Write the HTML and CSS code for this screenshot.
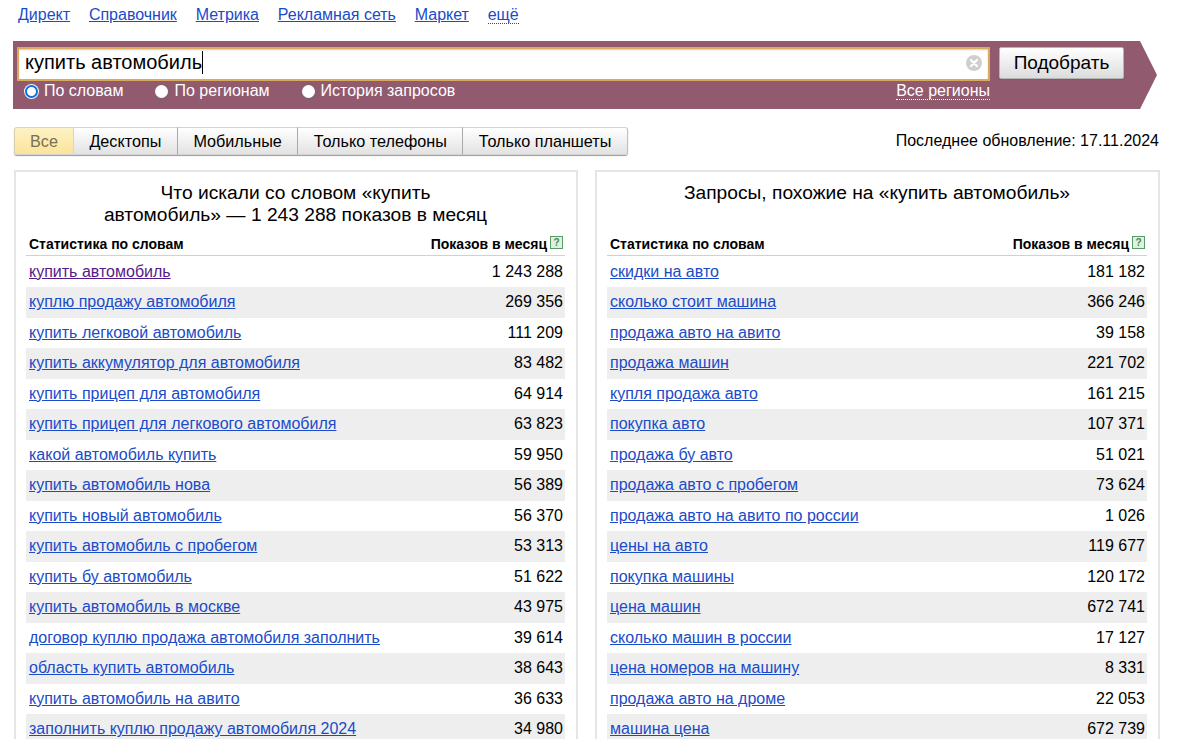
FILE: index.html
```html
<!DOCTYPE html>
<html lang="ru">
<head>
<meta charset="utf-8">
<title>Подбор слов</title>
<link rel="stylesheet" href="styles.css">
</head>
<body>
<nav class="nav">
  <a href="#">Директ</a><a href="#">Справочник</a><a href="#">Метрика</a><a href="#">Рекламная сеть</a><a href="#">Маркет</a><a href="#" class="more">ещё</a>
</nav>
<form class="banner">
  <div class="banner-main">
    <div class="search">
      <div class="field"><span class="field-text">купить автомобиль</span><span class="caret"></span></div>
      <svg class="clear" width="16" height="16" viewBox="0 0 16 16"><circle cx="8" cy="8" r="8" fill="#cfcfcf"/><path d="M5 5l6 6M11 5l-6 6" stroke="#fff" stroke-width="2.2" stroke-linecap="round"/></svg>
    </div>
    <div class="options">
      <label class="opt"><input type="radio" name="m" checked>По словам</label>
      <label class="opt"><input type="radio" name="m">По регионам</label>
      <label class="opt"><input type="radio" name="m">История запросов</label>
      <a href="#" class="regions">Все регионы</a>
    </div>
  </div>
  <button type="button" class="submit">Подобрать</button>
</form>
<div class="toolbar">
  <div class="tabs">
    <span class="tab active">Все</span><span class="tab">Десктопы</span><span class="tab">Мобильные</span><span class="tab">Только телефоны</span><span class="tab">Только планшеты</span>
  </div>
  <div class="updated">Последнее обновление: 17.11.2024</div>
</div>
<main class="panels">
  <section class="panel panel-left">
    <h2 class="title">Что искали со словом «купить<br>автомобиль» — 1 243 288 показов в месяц</h2>
    <div class="head"><span>Статистика по словам</span><span class="head-r">Показов в месяц<i class="help">?</i></span></div>
    <div class="row"><a href="#" class="visited">купить автомобиль</a><span>1 243 288</span></div>
    <div class="row"><a href="#">куплю продажу автомобиля</a><span>269 356</span></div>
    <div class="row"><a href="#">купить легковой автомобиль</a><span>111 209</span></div>
    <div class="row"><a href="#">купить аккумулятор для автомобиля</a><span>83 482</span></div>
    <div class="row"><a href="#">купить прицеп для автомобиля</a><span>64 914</span></div>
    <div class="row"><a href="#">купить прицеп для легкового автомобиля</a><span>63 823</span></div>
    <div class="row"><a href="#">какой автомобиль купить</a><span>59 950</span></div>
    <div class="row"><a href="#">купить автомобиль нова</a><span>56 389</span></div>
    <div class="row"><a href="#">купить новый автомобиль</a><span>56 370</span></div>
    <div class="row"><a href="#">купить автомобиль с пробегом</a><span>53 313</span></div>
    <div class="row"><a href="#">купить бу автомобиль</a><span>51 622</span></div>
    <div class="row"><a href="#">купить автомобиль в москве</a><span>43 975</span></div>
    <div class="row"><a href="#">договор куплю продажа автомобиля заполнить</a><span>39 614</span></div>
    <div class="row"><a href="#">область купить автомобиль</a><span>38 643</span></div>
    <div class="row"><a href="#">купить автомобиль на авито</a><span>36 633</span></div>
    <div class="row"><a href="#">заполнить куплю продажу автомобиля 2024</a><span>34 980</span></div>
  </section>
  <section class="panel panel-right">
    <h2 class="title">Запросы, похожие на «купить автомобиль»<br>&nbsp;</h2>
    <div class="head"><span>Статистика по словам</span><span class="head-r">Показов в месяц<i class="help">?</i></span></div>
    <div class="row"><a href="#">скидки на авто</a><span>181 182</span></div>
    <div class="row"><a href="#">сколько стоит машина</a><span>366 246</span></div>
    <div class="row"><a href="#">продажа авто на авито</a><span>39 158</span></div>
    <div class="row"><a href="#">продажа машин</a><span>221 702</span></div>
    <div class="row"><a href="#">купля продажа авто</a><span>161 215</span></div>
    <div class="row"><a href="#">покупка авто</a><span>107 371</span></div>
    <div class="row"><a href="#">продажа бу авто</a><span>51 021</span></div>
    <div class="row"><a href="#">продажа авто с пробегом</a><span>73 624</span></div>
    <div class="row"><a href="#">продажа авто на авито по россии</a><span>1 026</span></div>
    <div class="row"><a href="#">цены на авто</a><span>119 677</span></div>
    <div class="row"><a href="#">покупка машины</a><span>120 172</span></div>
    <div class="row"><a href="#">цена машин</a><span>672 741</span></div>
    <div class="row"><a href="#">сколько машин в россии</a><span>17 127</span></div>
    <div class="row"><a href="#">цена номеров на машину</a><span>8 331</span></div>
    <div class="row"><a href="#">продажа авто на дроме</a><span>22 053</span></div>
    <div class="row"><a href="#">машина цена</a><span>672 739</span></div>
  </section>
</main>
</body>
</html>
```
FILE: styles.css
```css
html, body {
  margin: 0;
  height: 739px;
  overflow: hidden;
  background: #fff;
}
body {
  font-family: "Liberation Sans", Arial, sans-serif;
  font-size: 16px;
  color: #000;
}
a { color: #1a4bc9; }

.nav {
  display: flex;
  gap: 18.8px;
  height: 41px;
  padding: 6px 0 0 18px;
  box-sizing: border-box;
  line-height: 18px;
}
.nav .more {
  color: #1a4bc9;
  text-decoration: none;
  border-bottom: 1px dotted #1a4bc9;
  align-self: flex-start;
  line-height: 17px;
}

.banner {
  display: flex;
  align-items: flex-start;
  box-sizing: border-box;
  margin: 0 0 0 13px;
  width: 1144px;
  height: 68px;
  padding: 6px 0 0 4px;
  background: #915a6f;
  clip-path: polygon(0 0, 1127px 0, 100% 50%, 1127px 100%, 0 100%);
}
.banner-main { width: 973px; }
.search { position: relative; }
.field {
  box-sizing: border-box;
  display: flex;
  align-items: center;
  height: 34px;
  padding: 0 0 3px 6px;
  background: #fff;
  border: 2px solid #d9a95c;
  box-shadow: inset 0 1px 2px #ccc;
  font-size: 20px;
}
.caret {
  display: inline-block;
  width: 1px;
  height: 23px;
  background: #000;
}
.clear {
  position: absolute;
  right: 8px;
  top: 8px;
}
.options {
  display: flex;
  align-items: center;
  height: 20px;
  padding-left: 8px;
  color: #fff;
}
.opt {
  display: flex;
  align-items: center;
  margin-right: 32px;
  white-space: nowrap;
}
.opt input {
  appearance: none;
  box-sizing: border-box;
  width: 13px;
  height: 13px;
  margin: 0 6px 0 0;
  border-radius: 50%;
  background: #fff;
  box-shadow: 0.5px 0.5px 1px 1px rgba(110, 110, 110, .55);
}
.opt input:checked {
  border: 2.5px solid #0f6fe6;
  background: #fff;
  box-shadow: 0 0 0 1px #f4f4f4;
}
.regions {
  margin-left: auto;
  color: #fff;
  text-decoration: none;
  border-bottom: 1px dotted #fff;
  line-height: 17px;
}
.submit {
  box-sizing: border-box;
  width: 125px;
  height: 32px;
  margin-left: 9px;
  padding: 0;
  font: 19px "Liberation Sans", Arial, sans-serif;
  color: #000;
  border: 1px solid #b5b5b5;
  border-radius: 2px;
  background: linear-gradient(#fff, #dcdcdc);
  box-shadow: 0 1px 1px #666;
}

.toolbar {
  display: flex;
  align-items: center;
  justify-content: space-between;
  margin: 18px 41px 15px 14px;
  height: 28px;
}
.tabs {
  display: flex;
  height: 28px;
  border-radius: 3px;
  box-shadow: 0 1px 1px #999;
}
.tab {
  display: flex;
  align-items: center;
  padding: 0 15.5px;
  font-size: 16.2px;
  border: 1px solid #d3d3d3;
  border-left: 0;
  border-right: 1px solid #a9a9a9;
  background: linear-gradient(#fff, #e2e2e2);
}
.tab:last-child { border-radius: 0 3px 3px 0; border-right-color: #c0c0c0; }
.tab.active {
  padding: 0 15px;
  color: #7a6f50;
  border-radius: 3px 0 0 3px;
  border-left: 1px solid #d8ceb0;
  border-right-color: #e0d6b0;
  background: linear-gradient(#fdf2c5, #fbe39b);
}

.panels {
  display: flex;
  margin-left: 14px;
  gap: 17px;
}
.panel {
  box-sizing: border-box;
  height: 600px;
  padding: 10px 11px 0 10px;
  border: 2px solid #e5e5e5;
}
.panel-left { width: 564px; }
.panel-right { width: 565px; padding-left: 10px; }
.title {
  margin: 0 0 7px;
  font-size: 19.2px;
  font-weight: 400;
  line-height: 22px;
  text-align: center;
}
.head {
  display: flex;
  justify-content: space-between;
  align-items: center;
  height: 22px;
  margin-bottom: .5px;
  padding: 0 2px 0 3px;
  font-size: 14px;
  font-weight: 700;
  border-bottom: 1px solid #d0cfdf;
}
.head-r { display: flex; align-items: center; }
.help {
  box-sizing: border-box;
  width: 13px;
  height: 13px;
  margin: -3px 0 0 3px;
  border: 1px solid #5a9a6a;
  background: #dff0e0;
  color: #3f8a50;
  font: 700 10px/11px "Liberation Sans", Arial, sans-serif;
  text-align: center;
}
.row {
  display: flex;
  justify-content: space-between;
  align-items: center;
  height: 30.5px;
  padding: 0 2px 0 3px;
}
.row:nth-of-type(odd) { background: #eee; }
.row a.visited { color: #551a8b; }
```
